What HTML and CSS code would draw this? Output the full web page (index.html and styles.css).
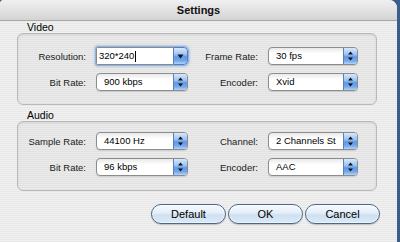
FILE: index.html
```html
<!DOCTYPE html>
<html>
<head>
<meta charset="utf-8">
<link rel="stylesheet" href="styles.css">
</head>
<body>
<div class="window">
  <div class="titlebar">Settings</div>
  <div class="content">
    <div class="group-label">Video</div>
    <div class="group group-video">
      <div class="label">Resolution:</div>
      <div class="combo">
        <div class="combo-field">320*240<span class="caret"></span></div>
        <div class="arrow arrow-combo">
          <svg width="7" height="5" viewBox="0 0 7 5"><path d="M0.5 0.5H6.5L3.5 4.5Z" fill="#111"/></svg>
        </div>
      </div>
      <div class="label">Frame Rate:</div>
      <div class="popup"><span class="value">30 fps</span><div class="arrow"><svg width="7" height="10" viewBox="0 0 7 10"><path d="M3.5 0.5L6 3.5H1Z M3.5 9.5L6 6.5H1Z" fill="#111"/></svg></div></div>
      <div class="label">Bit Rate:</div>
      <div class="popup"><span class="value">900 kbps</span><div class="arrow"><svg width="7" height="10" viewBox="0 0 7 10"><path d="M3.5 0.5L6 3.5H1Z M3.5 9.5L6 6.5H1Z" fill="#111"/></svg></div></div>
      <div class="label">Encoder:</div>
      <div class="popup"><span class="value">Xvid</span><div class="arrow"><svg width="7" height="10" viewBox="0 0 7 10"><path d="M3.5 0.5L6 3.5H1Z M3.5 9.5L6 6.5H1Z" fill="#111"/></svg></div></div>
    </div>
    <div class="group-label group-label-audio">Audio</div>
    <div class="group group-audio">
      <div class="label">Sample Rate:</div>
      <div class="popup"><span class="value">44100 Hz</span><div class="arrow"><svg width="7" height="10" viewBox="0 0 7 10"><path d="M3.5 0.5L6 3.5H1Z M3.5 9.5L6 6.5H1Z" fill="#111"/></svg></div></div>
      <div class="label">Channel:</div>
      <div class="popup"><span class="value">2 Channels St</span><div class="arrow"><svg width="7" height="10" viewBox="0 0 7 10"><path d="M3.5 0.5L6 3.5H1Z M3.5 9.5L6 6.5H1Z" fill="#111"/></svg></div></div>
      <div class="label">Bit Rate:</div>
      <div class="popup"><span class="value">96 kbps</span><div class="arrow"><svg width="7" height="10" viewBox="0 0 7 10"><path d="M3.5 0.5L6 3.5H1Z M3.5 9.5L6 6.5H1Z" fill="#111"/></svg></div></div>
      <div class="label">Encoder:</div>
      <div class="popup"><span class="value">AAC</span><div class="arrow"><svg width="7" height="10" viewBox="0 0 7 10"><path d="M3.5 0.5L6 3.5H1Z M3.5 9.5L6 6.5H1Z" fill="#111"/></svg></div></div>
    </div>
    <div class="buttons">
      <div class="button">Default</div>
      <div class="button">OK</div>
      <div class="button">Cancel</div>
    </div>
  </div>
</div>
</body>
</html>
```
FILE: styles.css
```css
html, body {
  margin: 0;
  padding: 0;
}
body {
  width: 400px;
  height: 242px;
  overflow: hidden;
  background: #3b5d8c;
  font-family: "Liberation Sans", Arial, sans-serif;
  color: #111;
}
.window {
  width: 397px;
  height: 242px;
  border-radius: 4px 8px 0 0;
  overflow: hidden;
  background: repeating-linear-gradient(to bottom, #f1f1f1 0px, #f1f1f1 1px, #e8e8e8 1px, #e8e8e8 2px);
}
.titlebar {
  height: 20px;
  line-height: 20px;
  border-bottom: 1px solid #a9a9a9;
  background: linear-gradient(to bottom, #f0f0f0 0%, #e2e2e2 50%, #d3d3d3 100%);
  text-align: center;
  font-weight: bold;
  font-size: 11px;
  color: #111;
}
.content {
  padding-left: 17px;
}
.group-label {
  height: 11px;
  padding-top: 1px;
  line-height: 11px;
  padding-left: 10px;
  font-size: 10.5px;
  color: #000;
}
.group-label-audio {
  margin-top: 4px;
  padding-top: 1px;
  height: 11px;
}
.group {
  box-sizing: border-box;
  width: 360px;
  border: 1px solid #b9b9b9;
  border-radius: 6px;
  background: rgba(0, 0, 0, 0.025);
  box-shadow: inset 0 1px 2px rgba(0, 0, 0, 0.10);
  display: grid;
  grid-template-columns: 78px 92px 80px 90px;
  grid-auto-rows: 18px;
  row-gap: 8px;
  align-items: center;
}
.group-video {
  padding-top: 13px;
  padding-bottom: 13px;
}
.group-audio {
  padding-top: 10px;
  padding-bottom: 14px;
}
.label {
  text-align: right;
  padding-right: 10px;
  font-size: 9.5px;
  color: #1a1a1a;
}
.popup {
  box-sizing: border-box;
  height: 18px;
  display: flex;
  align-items: stretch;
  border: 1px solid #8c8c8c;
  border-radius: 4px;
  background: linear-gradient(to bottom, #e9e9e9 0%, #ffffff 35%, #ffffff 100%);
  box-shadow: 0 1px 1px rgba(0, 0, 0, 0.12);
  overflow: hidden;
}
.value {
  flex: 1;
  padding-left: 7px;
  font-size: 9.5px;
  line-height: 16px;
  color: #000;
  white-space: nowrap;
  overflow: hidden;
}
.arrow {
  width: 13px;
  display: flex;
  align-items: center;
  justify-content: center;
  border-left: 1px solid #5b7fb3;
  background: linear-gradient(to bottom, #d6e8fd 0%, #9cc3f3 40%, #5f98e6 55%, #73a8ee 80%, #b3d4f8 100%);
}
.combo {
  box-sizing: border-box;
  height: 18px;
  display: flex;
  align-items: stretch;
  box-shadow: 0 0 0 1px #8fb4e4, 0 0 2px 2px rgba(125, 170, 230, 0.45);
  border-radius: 2px 4px 4px 2px;
  overflow: hidden;
}
.combo-field {
  flex: 1;
  background: #fff;
  border: 1px solid #8a8a8a;
  border-right: none;
  padding-left: 2px;
  font-size: 9.5px;
  line-height: 16px;
  color: #000;
  display: flex;
  align-items: center;
}
.caret {
  display: inline-block;
  width: 1px;
  height: 11px;
  background: #000;
  margin-left: 1px;
}
.arrow-combo {
  border: 1px solid #5b7fb3;
  border-radius: 0 4px 4px 0;
}
.buttons {
  margin-top: 13px;
  padding-right: 0;
  width: 363px;
  display: flex;
  justify-content: flex-end;
  gap: 2px;
}
.button {
  box-sizing: border-box;
  width: 75px;
  height: 20px;
  line-height: 18px;
  text-align: center;
  font-size: 11px;
  color: #000;
  border: 1px solid #4f6785;
  border-radius: 10px;
  background: linear-gradient(to bottom, #f6fafe 0%, #e4eef8 45%, #cfe0f1 55%, #d9e9f7 100%);
  box-shadow: 0 1px 1px rgba(0, 0, 0, 0.2), inset 0 0 0 1px rgba(255, 255, 255, 0.5);
}
```
